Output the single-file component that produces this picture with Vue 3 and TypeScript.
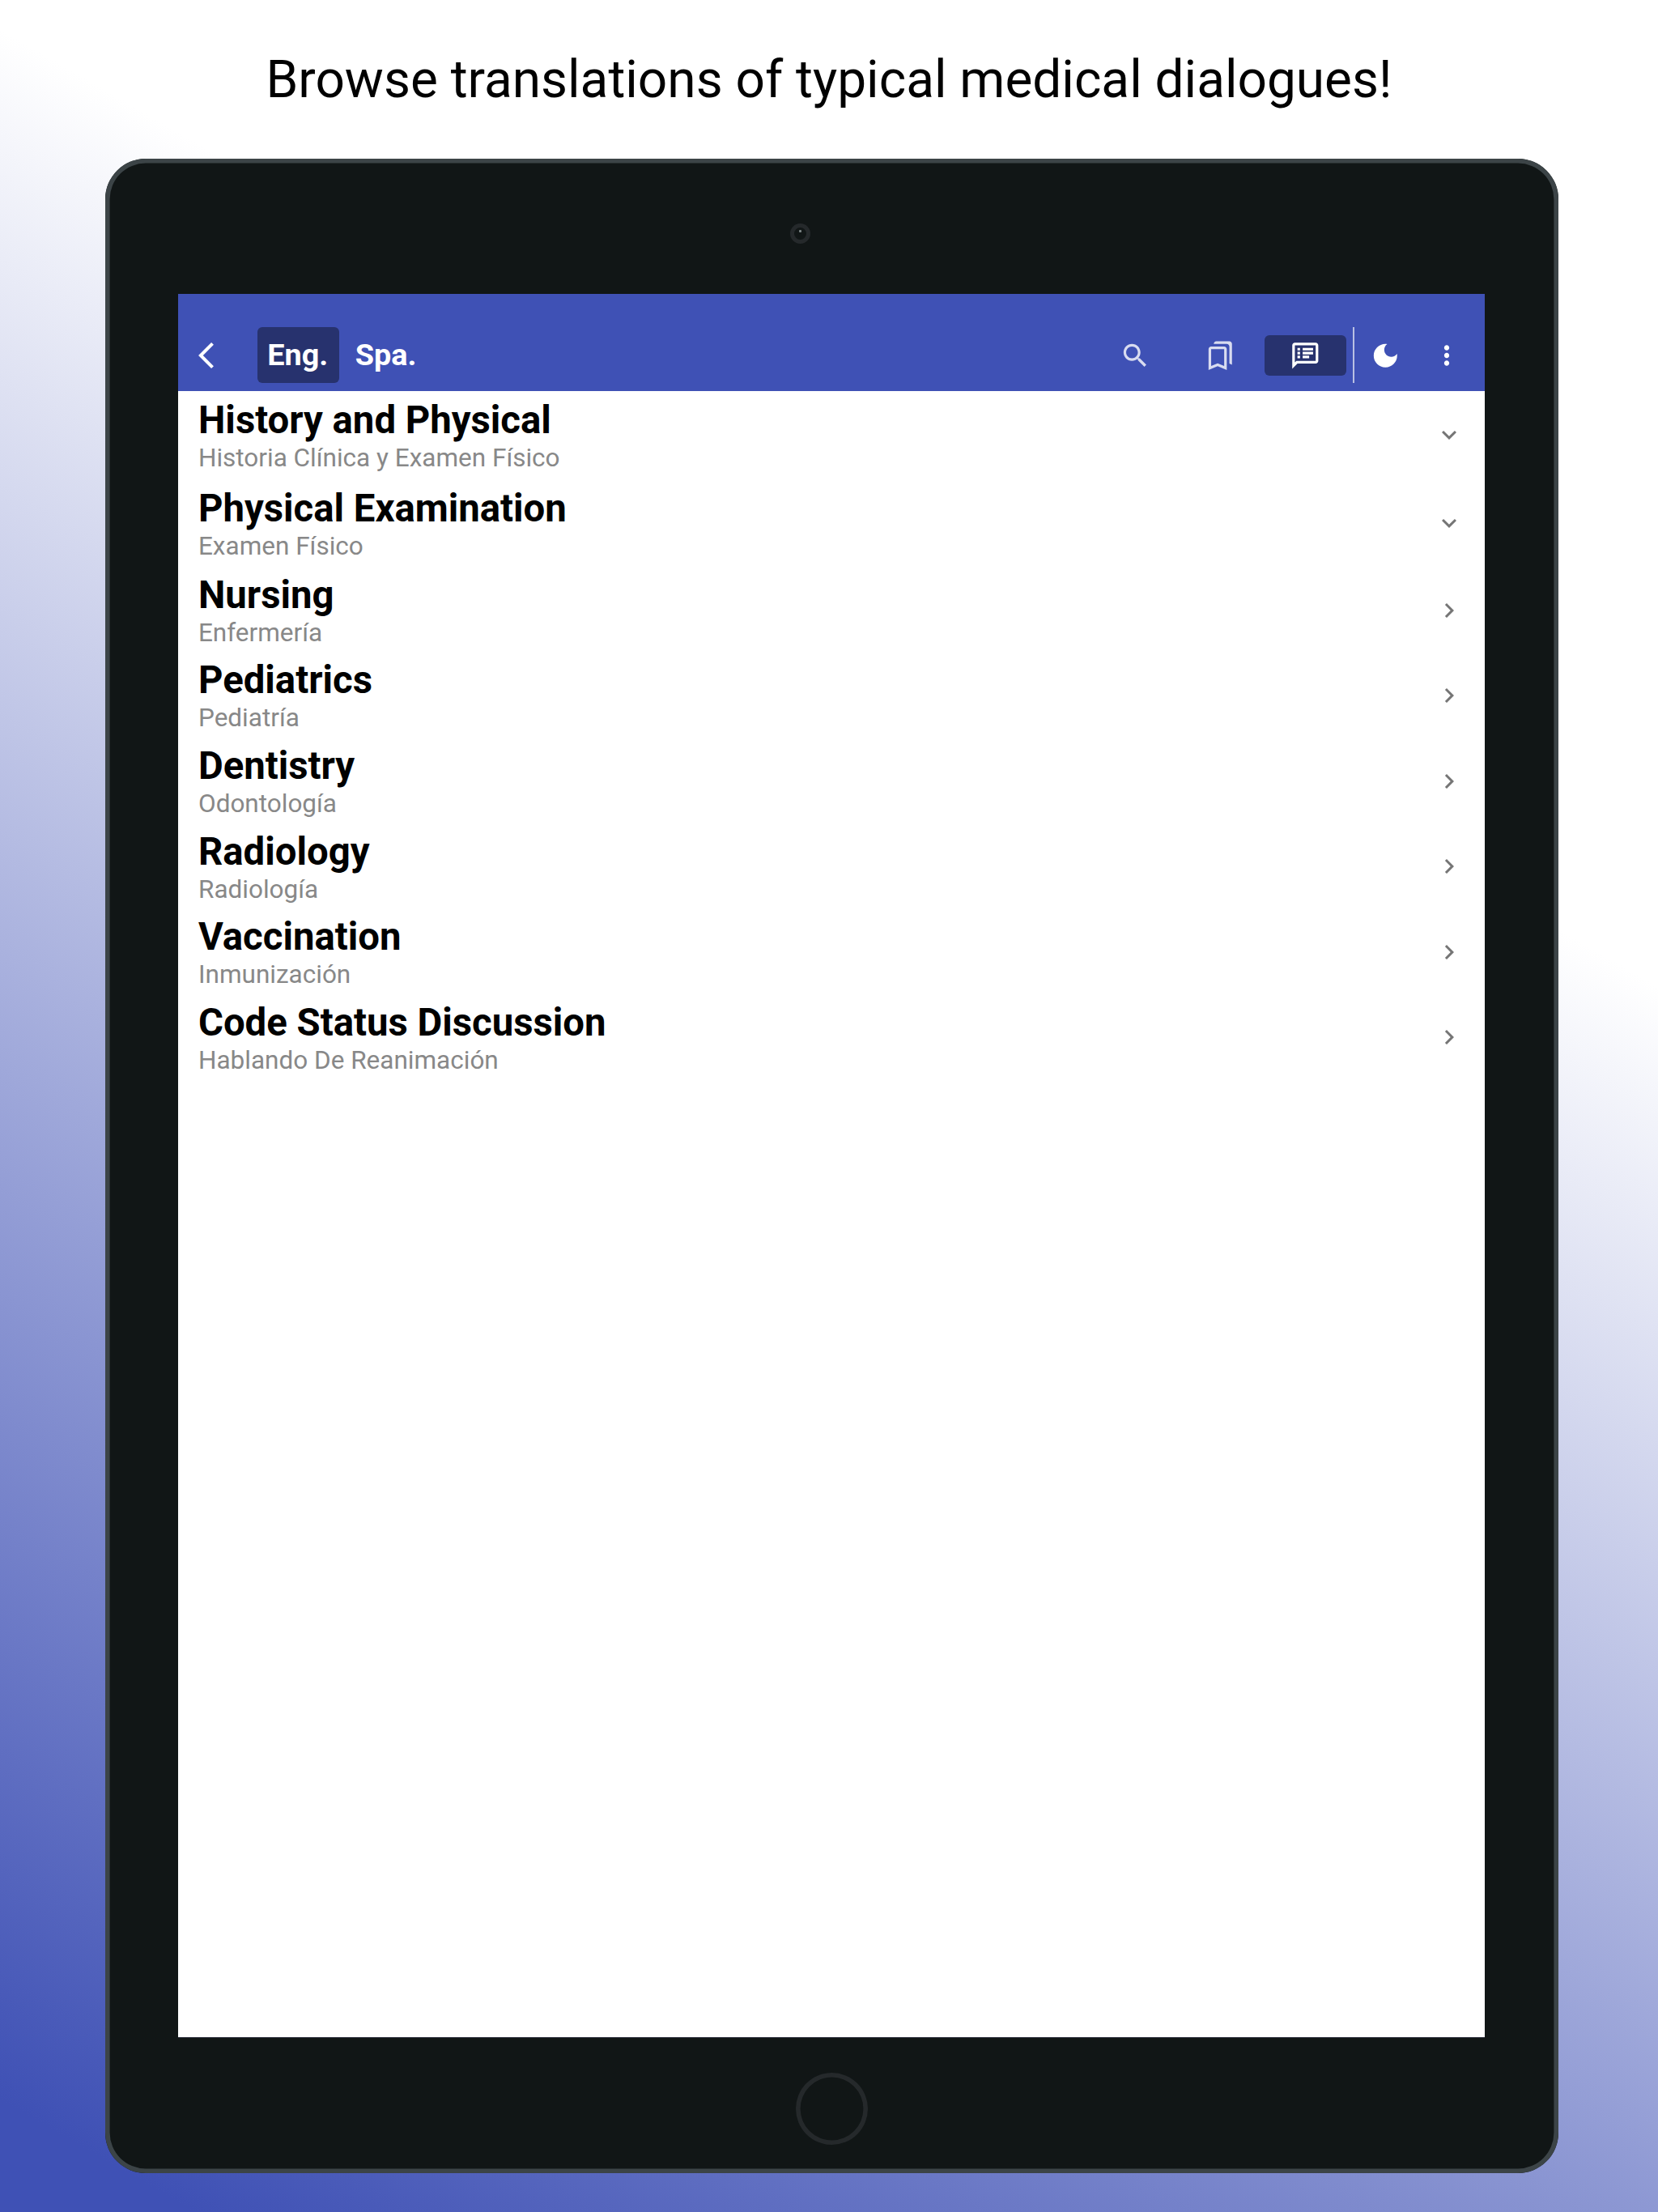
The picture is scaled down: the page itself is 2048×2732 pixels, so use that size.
<script setup lang="ts">
interface Topic {
  title: string
  subtitle: string
  expandable: boolean
}

const topics: Topic[] = [
  { title: 'History and Physical', subtitle: 'Historia Clínica y Examen Físico', expandable: true },
  { title: 'Physical Examination', subtitle: 'Examen Físico', expandable: true },
  { title: 'Nursing', subtitle: 'Enfermería', expandable: false },
  { title: 'Pediatrics', subtitle: 'Pediatría', expandable: false },
  { title: 'Dentistry', subtitle: 'Odontología', expandable: false },
  { title: 'Radiology', subtitle: 'Radiología', expandable: false },
  { title: 'Vaccination', subtitle: 'Inmunización', expandable: false },
  { title: 'Code Status Discussion', subtitle: 'Hablando De Reanimación', expandable: false },
]
</script>

<template>
  <div class="page">
    <h1 class="headline">Browse translations of typical medical dialogues!</h1>
    <div class="device">
      <div class="bezel-top"><span class="camera"><i class="glint"></i></span></div>
      <div class="screen">
        <header class="bar">
          <svg class="back" viewBox="0 2.1 11.67 19.8"><path d="M11.67 3.87L9.9 2.1 0 12l9.9 9.9 1.77-1.77L3.54 12z" /></svg>
          <div class="lang active">Eng.</div>
          <div class="lang">Spa.</div>
          <div class="spacer"></div>
          <div class="tab dim">
            <svg class="icon" viewBox="0 0 24 24"><path d="M15.5 14h-.79l-.28-.27C15.41 12.59 16 11.11 16 9.5 16 5.91 13.09 3 9.5 3S3 5.91 3 9.5 5.91 16 9.5 16c1.61 0 3.09-.59 4.23-1.57l.27.28v.79l5 4.99L20.49 19l-4.99-5zm-6 0C7.01 14 5 11.99 5 9.5S7.01 5 9.5 5 14 7.01 14 9.5 11.99 14 9.5 14z" /></svg>
          </div>
          <div class="tab dim">
            <svg class="icon" viewBox="0 0 24 24"><path d="M15 7v12.97l-4.21-1.81-.79-.34-.79.34L5 19.97V7h10m4-6H8.99C7.89 1 7 1.9 7 3h10c1.1 0 2 .9 2 2v13l2 1V3c0-1.1-.9-2-2-2zm-4 4H5c-1.1 0-2 .9-2 2v16l7-3 7 3V7c0-1.1-.9-2-2-2z" /></svg>
          </div>
          <div class="tab selected">
            <svg class="icon" viewBox="0 0 24 24"><path d="M20 2H4c-1.1 0-1.99.9-1.99 2L2 22l4-4h14c1.1 0 2-.9 2-2V4c0-1.1-.9-2-2-2zm0 14H5.17l-.59.59-.58.58V4h16v12zM6 12h2v2H6zm0-3h2v2H6zm0-3h2v2H6zm4 6h5v2h-5zm0-3h8v2h-8zm0-3h8v2h-8z" /></svg>
          </div>
          <span class="divider"></span>
          <svg class="icon moon" viewBox="0 0 24 24"><path d="M12 3c-4.97 0-9 4.03-9 9s4.03 9 9 9 9-4.03 9-9c0-.46-.04-.92-.1-1.36-.98 1.37-2.58 2.26-4.4 2.26-2.98 0-5.4-2.42-5.4-5.4 0-1.81.89-3.42 2.26-4.4-.44-.06-.9-.1-1.36-.1z" /></svg>
          <svg class="icon more" viewBox="0 0 24 24"><path d="M12 8c1.1 0 2-.9 2-2s-.9-2-2-2-2 .9-2 2 .9 2 2 2zm0 2c-1.1 0-2 .9-2 2s.9 2 2 2 2-.9 2-2-.9-2-2-2zm0 6c-1.1 0-2 .9-2 2s.9 2 2 2 2-.9 2-2-.9-2-2-2z" /></svg>
        </header>
        <main class="list">
          <div v-for="t in topics" :key="t.title" class="row" :class="{ expandable: t.expandable }">
            <div class="texts">
              <div class="title">{{ t.title }}</div>
              <div class="subtitle">{{ t.subtitle }}</div>
            </div>
            <svg class="chevron" viewBox="0 0 24 24">
              <path v-if="t.expandable" d="M16.59 8.59L12 13.17 7.41 8.59 6 10l6 6 6-6z" />
              <path v-else d="M10 6L8.59 7.41 13.17 12l-4.58 4.59L10 18l6-6z" />
            </svg>
          </div>
        </main>
      </div>
      <div class="bezel-bottom"><span class="home"></span></div>
    </div>
  </div>
</template>

<style>
body {
  margin: 0;
}
</style>

<style scoped>
.page {
  width: 2048px;
  height: 2732px;
  overflow: hidden;
  font-family: Roboto, 'Liberation Sans', sans-serif;
  background: linear-gradient(30deg, #3f51b5 120px, #ffffff 2335px);
}
.headline {
  margin: 0;
  height: 196px;
  line-height: 198px;
  text-align: center;
  font-size: 63.95px;
  font-weight: 400;
  color: #000;
  white-space: nowrap;
}
.device {
  box-sizing: border-box;
  width: 1794.6px;
  height: 2487.7px;
  margin-left: 130.2px;
  padding: 5.6px;
  border-radius: 50px;
  background: #111616;
  box-shadow: inset 0 0 0 5.6px #3c4447;
  display: flex;
  flex-direction: column;
}
.bezel-top {
  height: 161.4px;
  flex: none;
}
.camera {
  display: flex;
  justify-content: center;
  width: 25px;
  height: 25px;
  margin: 74.4px 0 0 840px;
  box-shadow: inset 0 0 0 5px #25292b;
  border-radius: 50%;
}
.glint {
  width: 3px;
  height: 3px;
  margin-top: 8px;
  border-radius: 1px;
  background: #7c8585;
}
.screen {
  width: 1614px;
  height: 2153px;
  flex: none;
  margin-left: 84.2px;
  background: #fff;
  box-shadow: 0 1px 0 #30323f;
}
.bar {
  box-sizing: border-box;
  height: 120px;
  padding: 32px 27.8px 0 25px;
  display: flex;
  align-items: center;
  background: #3f51b5;
  color: #fff;
}
svg {
  fill: currentColor;
  flex: none;
  display: block;
}
.back {
  width: 19px;
  height: 32px;
  margin-right: 53.7px;
}
.lang {
  box-sizing: border-box;
  height: 69px;
  line-height: 68px;
  padding: 0 12.6px;
  border-radius: 6px;
  font-size: 37.8px;
  font-weight: 700;
  margin-right: 7.5px;
}
.active,
.selected {
  background: #27326e;
}
.active {
  width: 101px;
}
.spacer {
  flex: 1;
}
.tab {
  width: 101px;
  height: 50.5px;
  margin-left: 4px;
  border-radius: 6px;
  display: flex;
  align-items: center;
  justify-content: center;
}
.dim {
  color: #d9dcf0;
}
.icon {
  width: 38.6px;
  height: 38.6px;
}
.divider {
  width: 2px;
  height: 69px;
  margin-left: 8.5px;
  background: #b9c0e3;
}
.moon {
  margin-left: 18.8px;
}
.more {
  width: 38px;
  height: 38px;
  margin-left: 37.6px;
}
.row {
  height: 105.56px;
  padding: 0 26px 0 25px;
  display: flex;
  align-items: center;
  justify-content: space-between;
}
.expandable {
  height: 109px;
}
.texts {
  margin-top: -0.8px;
}
.title {
  font-size: 47.3px;
  line-height: 56px;
  font-weight: 700;
  color: #000;
}
.subtitle {
  font-size: 31.5px;
  line-height: 37px;
  color: #888;
}
.chevron {
  width: 36px;
  height: 36px;
  color: #757575;
}
.home {
  display: block;
  width: 89px;
  height: 89px;
  margin: 43.7px 0 0 846.9px;
  box-shadow: inset 0 0 0 5.6px #25292b;
  border-radius: 50%;
}
</style>
